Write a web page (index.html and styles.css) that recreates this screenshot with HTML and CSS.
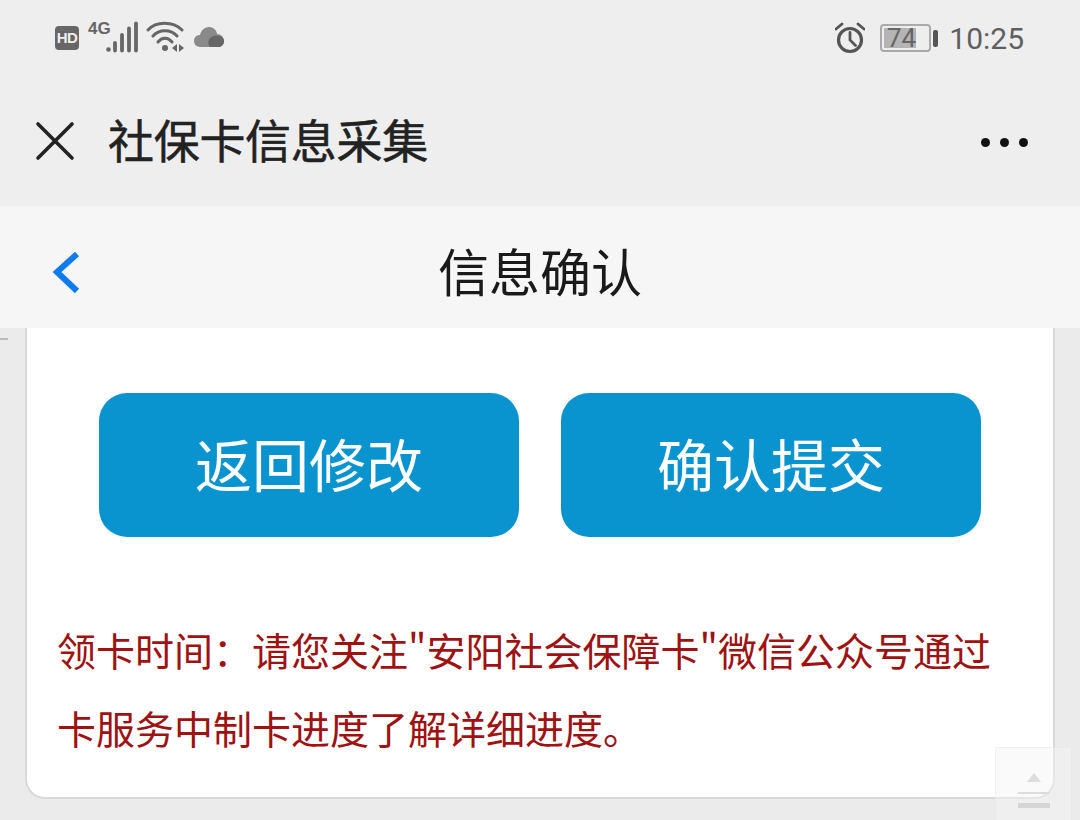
FILE: index.html
```html
<!DOCTYPE html>
<html lang="zh-CN">
<head>
  <meta charset="UTF-8">
  <meta name="viewport" content="width=device-width, initial-scale=1.0">
  <title>社保卡信息采集</title>
  <link rel="stylesheet" href="styles.css">
</head>
<body>
  <div class="phone">
    <div class="status-bar">
      <div class="status-left">
        <span class="hd-badge">HD</span>
        <span class="net-label">4G</span>
        <svg class="signal" width="34" height="34" viewBox="0 0 34 34">
          <circle cx="2.500" cy="29.500" r="2.300" fill="#666"/>
          <path d="M9 23V30.500M16 15V30.500M23 8.500V30.500M30 3.500V30.500" stroke="#666" stroke-width="3.800" stroke-linecap="round" fill="none"/>
        </svg>
        <svg class="wifi" width="40" height="34" viewBox="0 0 40 34">
          <path d="M2 10C10 1 27 1 36 10M7 16C13 9 25 9 31 16M12 22C16 17 22 17 26 22" stroke="#666" stroke-width="3" stroke-linecap="round" fill="none"/>
          <circle cx="19" cy="28" r="3" fill="#666"/>
          <path d="M31 24v8l-5-4zM33 24l5 4-5 4z" fill="#666"/>
        </svg>
        <svg class="cloud" width="30" height="20" viewBox="0 0 30 20">
          <path d="M7 20C2 20 0 17 0 14C0 10 3 8 6 8C7 3 11 0 15 0C20 0 23 4 23 7C27 7 30 10 30 14C30 18 27 20 24 20Z" fill="#8a8a8a"/>
          <path d="M16 20C13 17 14 10 20 9C25 8 30 10 30 14C30 18 27 20 24 20Z" fill="#666"/>
        </svg>
      </div>
      <div class="status-right">
        <svg class="alarm" width="30" height="32" viewBox="0 0 30 32">
          <circle cx="15" cy="18" r="11.500" stroke="#555" stroke-width="3.200" fill="none"/>
          <path d="M15 10.500V18L20.500 23.500M1 7L7 2M29 7L23 2" stroke="#555" stroke-width="2.800" fill="none" stroke-linecap="round"/>
        </svg>
        <div class="battery">
          <div class="battery-body">
            <div class="battery-level" style="width: 74%"></div>
            <span class="battery-num">74</span>
          </div>
          <div class="battery-tip"></div>
        </div>
        <span class="clock">10:25</span>
      </div>
    </div>

    <div class="wx-bar">
      <svg class="close-icon" width="40" height="40" viewBox="0 0 40 40">
        <path d="M3 3L37 37M37 3L3 37" stroke="#222" stroke-width="3.600" stroke-linecap="round"/>
      </svg>
      <h1 class="wx-title">社保卡信息采集</h1>
      <div class="more-dots"><i></i><i></i><i></i></div>
    </div>

    <div class="page-nav">
      <svg class="back-icon" width="30" height="46" viewBox="0 0 30 46">
        <path d="M26 4L6 22L26 41" stroke="#0f7bf0" stroke-width="6" fill="none"/>
      </svg>
      <h2 class="page-title">信息确认</h2>
    </div>

    <div class="content">
      <div class="edge-dash"></div>
      <div class="card">
        <div class="btn-row">
          <button class="action-btn">返回修改</button>
          <button class="action-btn">确认提交</button>
        </div>
        <p class="notice">领卡时间：请您关注"安阳社会保障卡"微信公众号通过卡服务中制卡进度了解详细进度。</p>
      </div>
      <div class="to-top">
        <div class="to-top-arrow"></div>
        <div class="to-top-line thin"></div>
        <div class="to-top-line"></div>
      </div>
    </div>
  </div>
</body>
</html>
```

FILE: styles.css
```css
* {
  margin: 0;
  padding: 0;
  box-sizing: border-box;
}

body {
  font-family: "Noto Sans CJK SC", "Noto Sans", sans-serif;
  background: #ebebeb;
}

.phone {
  width: 1080px;
  height: 820px;
  overflow: hidden;
  display: flex;
  flex-direction: column;
}

.status-bar {
  height: 78px;
  background: #eeeeee;
  display: flex;
  justify-content: space-between;
  padding: 20px 56px 0 55px;
}

.status-left,
.status-right {
  display: flex;
  align-items: flex-start;
}

.status-right {
  padding-top: 1px;
}

.hd-badge {
  width: 24px;
  height: 24px;
  margin-top: 6px;
  border-radius: 4px;
  background: #666;
  color: #eee;
  font: 700 15px/24px "Liberation Sans", sans-serif;
  letter-spacing: -0.5px;
  text-align: center;
}

.net-label {
  width: 27px;
  padding-left: 9px;
  font: 700 17px/18px "Liberation Sans Narrow", "Liberation Sans", sans-serif;
  color: #666;
}

.wifi {
  margin-left: 6px;
}

.cloud {
  margin: 7px 0 0 8px;
}

.alarm {
  margin-top: 1px;
}

.battery {
  display: flex;
  align-items: center;
  margin: 3px 0 0 15px;
}

.battery-body {
  position: relative;
  width: 51px;
  height: 28px;
  border: 2px solid #aaa;
  border-radius: 4px;
  padding: 2px;
}

.battery-level {
  height: 100%;
  background: #b4b4b4;
}

.battery-num {
  position: absolute;
  top: 0;
  left: 0;
  width: 82%;
  text-align: center;
  font: 26px/24px "Roboto", sans-serif;
  color: #666;
}

.battery-tip {
  width: 5px;
  height: 17px;
  margin-left: 2px;
  border-radius: 2px;
  background: #555;
}

.clock {
  margin-left: 11px;
  font: 30px/36px "Roboto", sans-serif;
  color: #5f5f5f;
}

.wx-bar {
  height: 128px;
  background: #eeeeee;
  display: flex;
  align-items: center;
  padding: 0 52px 8px 35px;
}

.close-icon {
  margin-top: 6px;
}

.wx-title {
  flex: 1;
  margin-left: 33px;
  font-size: 46px;
  font-weight: 400;
  letter-spacing: -0.3px;
  -webkit-text-stroke: 0.5px #222;
  color: #222;
}

.more-dots {
  display: flex;
  gap: 10px;
  margin-top: 8px;
}

.more-dots i {
  width: 9px;
  height: 9px;
  border-radius: 50%;
  background: #111;
}

.page-nav {
  position: relative;
  height: 122px;
  background: #f6f6f6;
  display: flex;
  align-items: center;
  justify-content: center;
  padding-top: 5px;
}

.back-icon {
  position: absolute;
  left: 51px;
  top: 44px;
}

.page-title {
  font-size: 51px;
  font-weight: 400;
  color: #1a1a1a;
}

.content {
  position: relative;
  flex: 1;
  padding: 0 25px 21px;
}

.edge-dash {
  position: absolute;
  left: 0;
  top: 10px;
  width: 8px;
  height: 2px;
  background: #bbb;
}

.card {
  height: 100%;
  background: #fff;
  border: 2px solid #d9d9d9;
  border-top: 0;
  border-radius: 0 0 20px 20px;
  padding: 65px 30px 0;
}

.btn-row {
  display: flex;
  gap: 42px;
  padding-left: 42px;
}

.action-btn {
  width: 420px;
  height: 144px;
  border: none;
  border-radius: 28px;
  padding-bottom: 6px;
  background: #0a94cf;
  color: #fff;
  font-family: inherit;
  font-size: 57px;
}

.notice {
  width: 940px;
  margin-top: 73px;
  font-size: 39px;
  line-height: 78px;
  color: #9e1212;
}

.to-top {
  position: absolute;
  left: 995px;
  top: 419px;
  width: 77px;
  height: 100px;
  background: rgba(245, 245, 245, 0.45);
  border: 1px solid rgba(225, 225, 225, 0.4);
  display: flex;
  flex-direction: column;
  align-items: center;
  padding-top: 25px;
}

.to-top-arrow {
  width: 0;
  height: 0;
  border: 7px solid transparent;
  border-top: 0;
  border-bottom: 9px solid #ddd;
}

.to-top-line {
  width: 32px;
  height: 5px;
  margin-top: 9px;
  background: #d5d5d5;
}

.to-top-line.thin {
  height: 2px;
  margin-top: 10px;
  background: #dcdcdc;
}
```
